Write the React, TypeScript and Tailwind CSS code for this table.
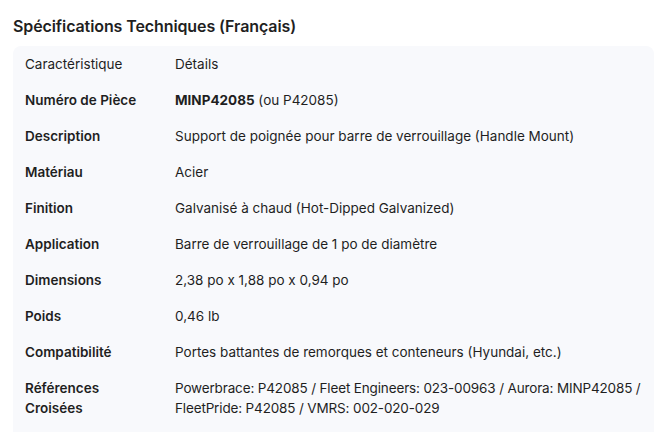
import React from 'react';

const rows: { label: React.ReactNode; value: React.ReactNode; tight?: boolean }[] = [
  {
    label: 'Numéro de Pièce',
    value: (
      <>
        <span className="font-bold">MINP42085</span> (ou P42085)
      </>
    ),
  },
  { label: 'Description', value: 'Support de poignée pour barre de verrouillage (Handle Mount)' },
  { label: 'Matériau', value: 'Acier' },
  { label: 'Finition', value: 'Galvanisé à chaud (Hot-Dipped Galvanized)' },
  { label: 'Application', value: 'Barre de verrouillage de 1 po de diamètre' },
  { label: 'Dimensions', value: '2,38 po x 1,88 po x 0,94 po' },
  { label: 'Poids', value: '0,46 lb' },
  { label: 'Compatibilité', value: 'Portes battantes de remorques et conteneurs (Hyundai, etc.)' },
  {
    label: (
      <>
        Références
        <br />
        Croisées
      </>
    ),
    value: 'Powerbrace: P42085 / Fleet Engineers: 023-00963 / Aurora: MINP42085 / FleetPride: P42085 / VMRS: 002-020-029',
    tight: true,
  },
];

export default function App() {
  return (
    <div className="w-[657px] h-[434px] overflow-hidden bg-white text-[#1f1f1f] font-['Inter',sans-serif]">
      <h2 className="pl-[13px] pt-[15px] text-[16px] leading-[22px] font-semibold tracking-[-0.1px]">
        Spécifications Techniques (Français)
      </h2>
      <div className="ml-[13px] mr-[3px] mt-[9px] rounded-t-lg bg-[#f8f9fc] pb-[6px]">
        <table className="w-full text-[13.5px] leading-[20px]">
          <thead>
            <tr>
              <th className="w-[162px] pl-3 py-2 text-left font-normal">Caractéristique</th>
              <th className="pr-1 py-2 text-left font-normal">Détails</th>
            </tr>
          </thead>
          <tbody>
            {rows.map((r, i) => (
              <tr key={i}>
                <td className="pl-3 py-2 align-top font-semibold">{r.label}</td>
                <td className={r.tight ? 'pr-1 py-2 align-top tracking-[-0.15px]' : 'pr-1 py-2 align-top'}>
                  {r.value}
                </td>
              </tr>
            ))}
          </tbody>
        </table>
      </div>
      <div className="ml-[13px] mr-[3px] mt-[4px] h-6 bg-[#f8f9fc]" />
    </div>
  );
}
